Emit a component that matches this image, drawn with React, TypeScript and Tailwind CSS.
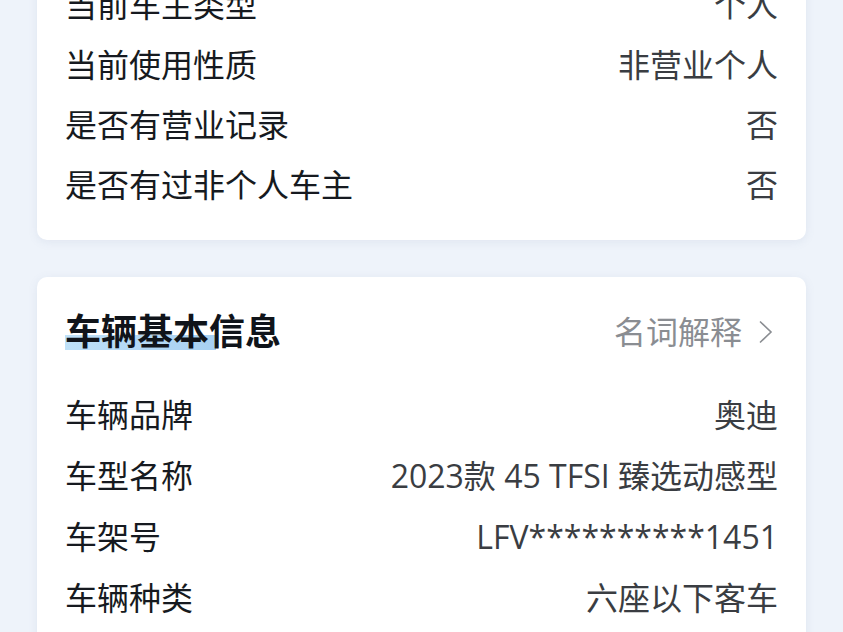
const ownerRows = [
  { label: "当前车主类型", value: "个人" },
  { label: "当前使用性质", value: "非营业个人" },
  { label: "是否有营业记录", value: "否" },
  { label: "是否有过非个人车主", value: "否" },
];

const vehicleRows = [
  { label: "车辆品牌", value: "奥迪" },
  { label: "车型名称", value: "2023款 45 TFSI 臻选动感型" },
  { label: "车架号", value: "LFV**********1451" },
  { label: "车辆种类", value: "六座以下客车" },
];

const font = { fontFamily: '"Open Sans", "Noto Sans CJK SC", "Noto Sans", sans-serif' };

function InfoRow({ label, value, tall }: { label: string; value: string; tall?: boolean }) {
  return (
    <div className={`flex items-center justify-between ${tall ? "h-[61px]" : "h-[60px]"}`}>
      <span className="text-[32px] leading-none text-[#161a20]">{label}</span>
      <span className="text-[32px] leading-none text-[#3a3d42]">{value}</span>
    </div>
  );
}

export default function App() {
  return (
    <div className="h-[632px] w-[843px] overflow-hidden bg-[#eef3fa]" style={font}>
      <div className="mx-[37px] -mt-[25px] rounded-b-[10px] bg-white px-[28px] pb-[25px] shadow-[0_2px_10px_rgba(120,140,170,0.12)]">
        {ownerRows.map((row) => (
          <InfoRow key={row.label} {...row} />
        ))}
      </div>

      <div className="mx-[37px] mt-[37px] rounded-[10px] bg-white px-[28px] pb-[40px] pt-[30px] shadow-[0_2px_10px_rgba(120,140,170,0.12)]">
        <div className="flex h-[50px] items-center justify-between">
          <div className="relative">
            <span className="absolute bottom-[1px] left-0 h-[15px] w-[151px] bg-gradient-to-r from-[#bfe1f8] to-[#a7d0f1]" />
            <span className="relative text-[36px] font-bold leading-none text-[#10141a]">车辆基本信息</span>
          </div>
          <div className="mr-[5px] flex items-center gap-[15px] text-[#8a8d92]">
            <span className="text-[32px] leading-none">名词解释</span>
            <svg width="16" height="24" viewBox="0 0 16 24" fill="none" stroke="#8a8d92" strokeWidth="1.6">
              <path d="M3 1.5 14 12 3 22.5" />
            </svg>
          </div>
        </div>
        <div className="mt-[27px]">
          {vehicleRows.map((row) => (
            <InfoRow key={row.label} {...row} tall />
          ))}
        </div>
      </div>
    </div>
  );
}
